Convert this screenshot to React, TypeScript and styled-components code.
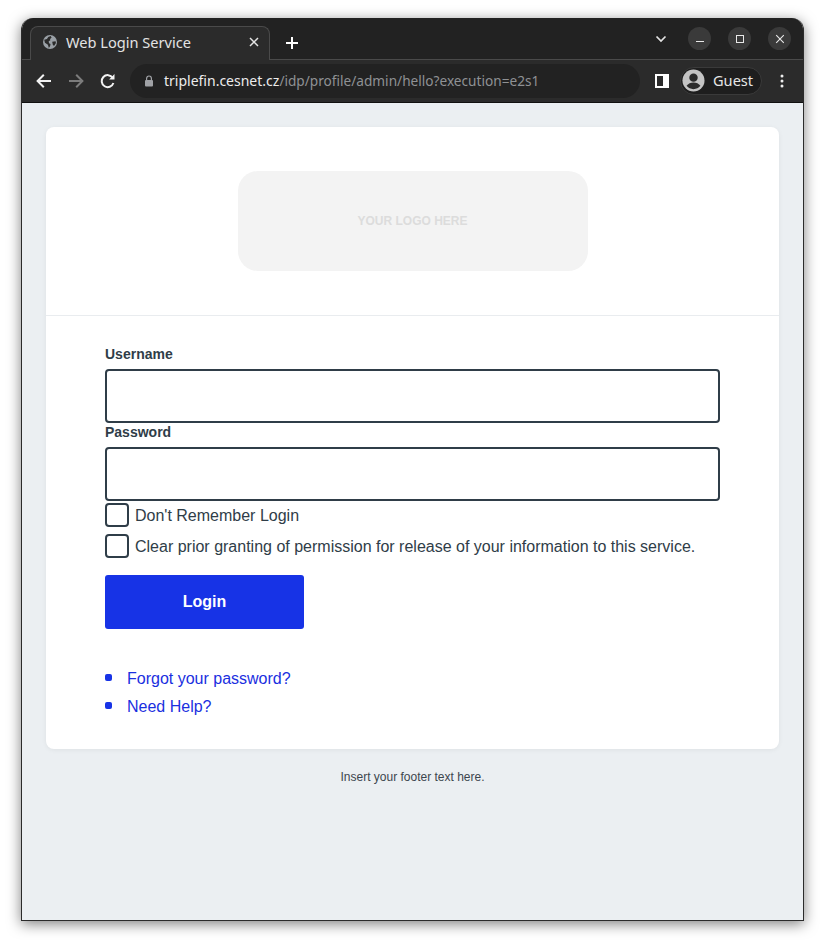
import React from 'react'
import styled, { createGlobalStyle } from 'styled-components'

const GlobalStyle = createGlobalStyle`
  html, body {
    margin: 0;
    padding: 0;
    background: #fff;
  }
  body {
    font-family: "Liberation Sans", Arial, sans-serif;
    overflow: hidden;
  }
`

const Desktop = styled.div`
  width: 825px;
  height: 945px;
  box-sizing: border-box;
  padding: 18px 21px 24px;
`

const Window = styled.div`
  width: 783px;
  height: 903px;
  box-sizing: border-box;
  display: flex;
  flex-direction: column;
  border-radius: 12px 12px 0 0;
  overflow: hidden;
  border: 1px solid #2b2b2b;
  border-top: 0;
`

const Shadowed = styled.div`
  border-radius: 12px 12px 0 0;
  box-shadow: 0 3px 14px rgba(0, 0, 0, 0.5);
  width: 783px;
  height: 903px;
`

const TabStrip = styled.div`
  height: 42px;
  flex: none;
  box-sizing: border-box;
  background: #222222;
  border-bottom: 1px solid #4a4a4a;
  display: flex;
  align-items: flex-end;
  padding-left: 8px;
`

const Tab = styled.div`
  width: 240px;
  height: 34px;
  margin-bottom: -1px;
  box-sizing: border-box;
  background: #2b2b2b;
  border: 1px solid #4a4a4a;
  border-bottom: 0;
  border-radius: 8px 8px 0 0;
  display: flex;
  align-items: center;
  padding: 0 10px 3px 12px;
  color: #e3e3e3;
  font: 14.6px "Noto Sans", sans-serif;
`

const TabTitle = styled.span`
  margin-left: 9px;
  flex: 1;
  white-space: nowrap;
`

const NewTab = styled.div`
  margin-left: 16px;
  height: 32px;
  display: flex;
  align-items: center;
`

const StripRight = styled.div`
  margin-left: auto;
  display: flex;
  align-items: center;
  height: 41px;
  padding-right: 12px;
`

const Chevron = styled.div`
  display: flex;
  margin-right: 4px;
  margin-top: 1px;
`

const WinButton = styled.div`
  width: 23px;
  height: 23px;
  border-radius: 50%;
  background: #3a3a3a;
  display: flex;
  align-items: center;
  justify-content: center;
  margin-left: 17px;
`

const Toolbar = styled.div`
  height: 43px;
  flex: none;
  box-sizing: border-box;
  background: #2b2b2b;
  border-bottom: 1px solid #111;
  display: flex;
  align-items: center;
  padding: 0 12px 1px 13px;
`

const NavIcon = styled.div`
  width: 18px;
  height: 18px;
  display: flex;
  margin-right: 14px;
  &:nth-of-type(3) {
    margin-right: 13px;
  }
`

const Omnibox = styled.div`
  width: 510px;
  height: 34px;
  border-radius: 17px;
  background: #222222;
  display: flex;
  align-items: center;
  padding-left: 14px;
  box-sizing: border-box;
  font-family: "Noto Sans", sans-serif;
  white-space: nowrap;
`

const Host = styled.span`
  color: #ececec;
  margin-left: 10px;
  font-size: 14px;
`

const UrlPath = styled.span`
  color: #8f9194;
  font-size: 13.65px;
`

const SidePanelIcon = styled.div`
  display: flex;
  margin-left: 15px;
`

const Profile = styled.div`
  margin-left: 11px;
  width: 82px;
  height: 28px;
  box-sizing: border-box;
  border-radius: 14px;
  background: #1e1e1e;
  border: 1px solid #3a3a3a;
  display: flex;
  align-items: center;
  padding-left: 1px;
  color: #e6e6e6;
  font: 14.6px "Noto Sans", sans-serif;
`

const GuestLabel = styled.span`
  margin-left: 8px;
  margin-top: -1px;
`

const MenuDots = styled.div`
  display: flex;
  margin-left: 18px;
`

const Viewport = styled.div`
  flex: 1;
  background: #ebeff2;
  padding: 24px 24px 0;
`

const Card = styled.main`
  background: #fff;
  border-radius: 8px;
  box-shadow: 0 1px 5px rgba(0, 0, 0, 0.06);
  height: 622px;
  box-sizing: border-box;
`

const CardHeader = styled.header`
  height: 189px;
  box-sizing: border-box;
  padding-top: 44px;
  border-bottom: 1px solid #e9ecef;
  display: flex;
  justify-content: center;
`

const LogoBox = styled.div`
  width: 350px;
  height: 100px;
  border-radius: 20px;
  background: #f3f3f3;
  color: #dcdcdc;
  font-size: 12px;
  font-weight: 700;
  display: flex;
  align-items: center;
  justify-content: center;
`

const Form = styled.form`
  padding: 30px 59px 0;
  color: #2f3d48;
`

const FieldLabel = styled.label`
  display: block;
  height: 17px;
  line-height: 17px;
  font-size: 14px;
  font-weight: 700;
  margin-bottom: 6px;
`

const TextInput = styled.input`
  display: block;
  width: 100%;
  height: 54px;
  box-sizing: border-box;
  border: 2px solid #2f3d48;
  border-radius: 4px;
  background: #fff;
  margin-bottom: 1px;
  &:last-of-type {
    margin-bottom: 2px;
  }
`

const CheckRow = styled.label`
  display: flex;
  align-items: center;
  height: 24px;
  margin-bottom: 7px;
  font-size: 16px;
  white-space: nowrap;
`

const CheckBox = styled.span`
  width: 24px;
  height: 24px;
  box-sizing: border-box;
  border: 2px solid #2f3d48;
  border-radius: 4px;
  margin-right: 6px;
  flex: none;
`

const CheckText = styled.span`
  margin-top: 2px;
`

const LoginButton = styled.button`
  display: block;
  width: 199px;
  height: 54px;
  margin-top: 17px;
  border: 0;
  border-radius: 3px;
  background: #1733e6;
  color: #fff;
  font: 700 16px "Liberation Sans", Arial, sans-serif;
`

const LinkList = styled.ul`
  list-style: none;
  margin: 36px 0 0;
  padding: 0;
`

const LinkItem = styled.li`
  height: 28px;
  display: flex;
  align-items: center;
  font-size: 16px;
  color: #1a2fe0;
  &::before {
    content: '';
    width: 7px;
    height: 7px;
    border-radius: 2px;
    background: #1733e6;
    margin-right: 15px;
    margin-bottom: 3px;
  }
`

const Footer = styled.footer`
  margin-top: 21px;
  text-align: center;
  font-size: 12px;
  line-height: 14px;
  color: #3c464e;
`

function GlobeIcon() {
  return (
    <svg width="14" height="14" viewBox="0 0 16 16">
      <circle cx="8" cy="8" r="8" fill="#9aa0a6" />
      <path
        d="M1.4 5.5 4.5 4.6 6 2.2 8.8 1.2 9.8 3 8 4.6 8.4 6 6.5 7 6.9 9.4 8.6 10.2 8.2 12.6 6.7 14.8 5.6 11.2 2.2 8.8Z M10.5 7.6 14.4 7.2 14.8 9 12.6 12.6 11.2 11.2Z"
        fill="#2b2b2b"
      />
    </svg>
  )
}

function Arrow({ color, flip }: { color: string; flip?: boolean }) {
  return (
    <svg width="18" height="18" viewBox="0 0 18 18" fill="none" stroke={color} strokeWidth="2">
      <path d={flip ? 'M2 9h13M9.2 2.8 15.4 9l-6.2 6.2' : 'M16 9H3M8.8 2.8 2.6 9l6.2 6.2'} />
    </svg>
  )
}

export default function App() {
  return (
    <>
      <GlobalStyle />
      <Desktop>
        <Shadowed>
          <Window>
            <TabStrip>
              <Tab>
                <GlobeIcon />
                <TabTitle>Web Login Service</TabTitle>
                <svg width="10" height="10" viewBox="0 0 10 10" stroke="#e3e3e3" strokeWidth="1.5">
                  <path d="M1 1l8 8M9 1l-8 8" />
                </svg>
              </Tab>
              <NewTab>
                <svg width="12" height="12" viewBox="0 0 12 12" stroke="#fff" strokeWidth="2">
                  <path d="M6 0v12M0 6h12" />
                </svg>
              </NewTab>
              <StripRight>
                <Chevron>
                  <svg width="12" height="8" viewBox="0 0 12 8" fill="none" stroke="#e3e3e3" strokeWidth="1.7">
                    <path d="M1.5 1.5 6 6l4.5-4.5" />
                  </svg>
                </Chevron>
                <WinButton>
                  <svg width="10" height="10" viewBox="0 0 10 10" stroke="#e8e8e8" strokeWidth="1">
                    <path d="M1 7.5h8" />
                  </svg>
                </WinButton>
                <WinButton>
                  <svg width="10" height="10" viewBox="0 0 10 10" fill="none" stroke="#e8e8e8" strokeWidth="1">
                    <rect x="1.5" y="1.5" width="7" height="7" />
                  </svg>
                </WinButton>
                <WinButton>
                  <svg width="10" height="10" viewBox="0 0 10 10" stroke="#e8e8e8" strokeWidth="1.1">
                    <path d="M1.2 1.2l7.6 7.6M8.8 1.2 1.2 8.8" />
                  </svg>
                </WinButton>
              </StripRight>
            </TabStrip>
            <Toolbar>
              <NavIcon>
                <Arrow color="#f2f2f2" />
              </NavIcon>
              <NavIcon>
                <Arrow color="#7c7c7c" flip />
              </NavIcon>
              <NavIcon>
                <svg width="18" height="18" viewBox="0 0 18 18" fill="none">
                  <path d="M14.4 11a6 6 0 1 1-.7-5.2" stroke="#f2f2f2" strokeWidth="2" />
                  <path d="M15.5 2v5.4h-5.4z" fill="#f2f2f2" />
                </svg>
              </NavIcon>
              <Omnibox>
                <svg width="10" height="12" viewBox="0 0 10 12">
                  <path d="M2.6 5V3.4a2.4 2.4 0 0 1 4.8 0V5" fill="none" stroke="#a0a2a6" strokeWidth="1.2" />
                  <rect x="1" y="5" width="8" height="6.5" rx="1" fill="#a0a2a6" />
                </svg>
                <Host>triplefin.cesnet.cz</Host>
                <UrlPath>/idp/profile/admin/hello?execution=e2s1</UrlPath>
              </Omnibox>
              <SidePanelIcon>
                <svg width="14" height="14" viewBox="0 0 14 14">
                  <path d="M0 0h14v14H0z M2 2v10h6V2z" fill="#fff" fillRule="evenodd" />
                </svg>
              </SidePanelIcon>
              <Profile>
                <svg width="23" height="23" viewBox="0 0 24 24">
                  <circle cx="12" cy="12" r="11.5" fill="#c4c4c4" />
                  <circle cx="12" cy="9" r="4.4" fill="#2b2b2b" />
                  <path d="M4.8 17.6c1.6-2.5 4.2-3.6 7.2-3.6s5.6 1.1 7.2 3.6A9.4 9.4 0 0 1 12 21a9.4 9.4 0 0 1-7.2-3.4z" fill="#2b2b2b" />
                </svg>
                <GuestLabel>Guest</GuestLabel>
              </Profile>
              <MenuDots>
                <svg width="4" height="14" viewBox="0 0 4 14" fill="#eee">
                  <circle cx="2" cy="2" r="1.5" />
                  <circle cx="2" cy="7" r="1.5" />
                  <circle cx="2" cy="12" r="1.5" />
                </svg>
              </MenuDots>
            </Toolbar>
            <Viewport>
              <Card>
                <CardHeader>
                  <LogoBox>YOUR LOGO HERE</LogoBox>
                </CardHeader>
                <Form>
                  <FieldLabel>Username</FieldLabel>
                  <TextInput type="text" />
                  <FieldLabel>Password</FieldLabel>
                  <TextInput type="password" />
                  <CheckRow>
                    <CheckBox />
                    <CheckText>Don't Remember Login</CheckText>
                  </CheckRow>
                  <CheckRow>
                    <CheckBox />
                    <CheckText>Clear prior granting of permission for release of your information to this service.</CheckText>
                  </CheckRow>
                  <LoginButton type="button">Login</LoginButton>
                  <LinkList>
                    <LinkItem>Forgot your password?</LinkItem>
                    <LinkItem>Need Help?</LinkItem>
                  </LinkList>
                </Form>
              </Card>
              <Footer>Insert your footer text here.</Footer>
            </Viewport>
          </Window>
        </Shadowed>
      </Desktop>
    </>
  )
}
